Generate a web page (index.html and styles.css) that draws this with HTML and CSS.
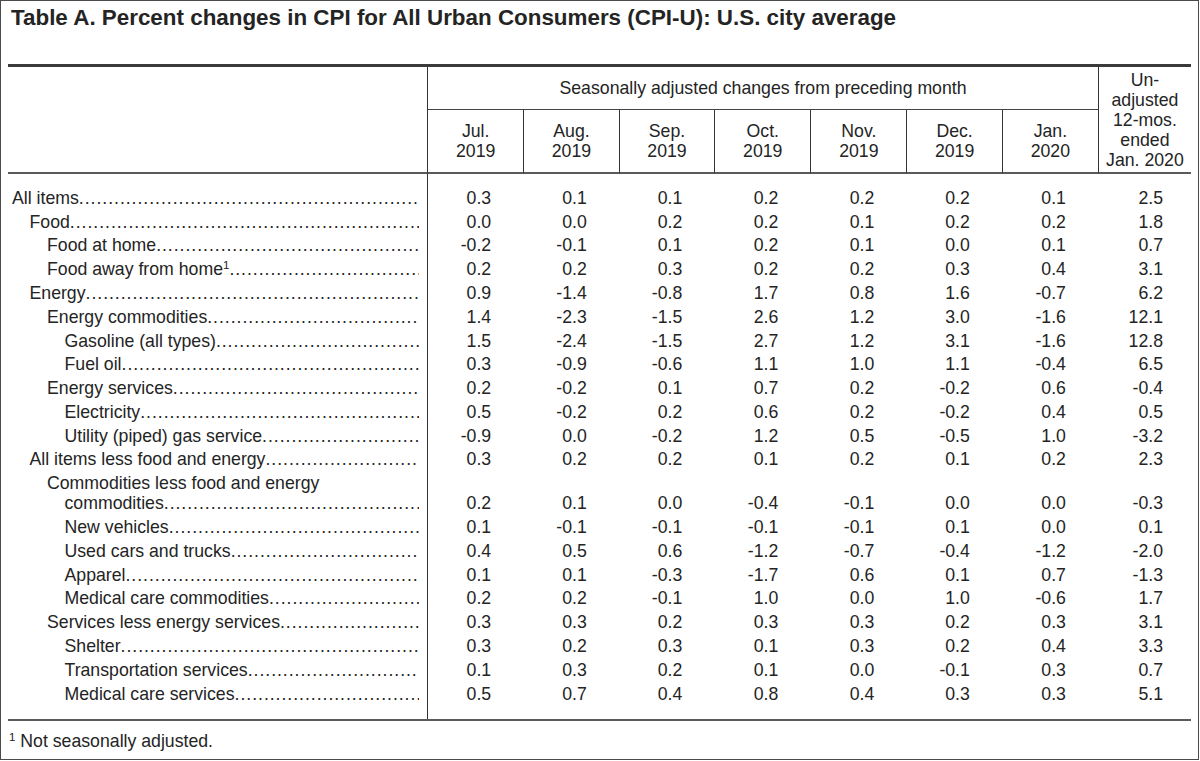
FILE: index.html
```html
<!DOCTYPE html>
<html>
<head>
<meta charset="utf-8">
<link rel="stylesheet" href="styles.css">
</head>
<body>
<div class="page">
  <div class="title">Table A. Percent changes in CPI for All Urban Consumers (CPI-U): U.S. city average</div>
  <table class="cpi">
    <colgroup>
      <col class="c-lab"><col class="c96"><col class="c95"><col class="c95"><col class="c96"><col class="c96"><col class="c95"><col class="c96"><col class="c-last">
    </colgroup>
    <thead>
      <tr class="hr1">
        <th rowspan="2" class="h-lab"></th>
        <th colspan="7" class="h-sa">Seasonally adjusted changes from preceding month</th>
        <th rowspan="2" class="h-un">Un-<br>adjusted<br>12-mos.<br>ended<br>Jan. 2020</th>
      </tr>
      <tr class="hr2">
        <th class="h-m">Jul.<br>2019</th>
        <th class="h-m">Aug.<br>2019</th>
        <th class="h-m">Sep.<br>2019</th>
        <th class="h-m">Oct.<br>2019</th>
        <th class="h-m">Nov.<br>2019</th>
        <th class="h-m">Dec.<br>2019</th>
        <th class="h-m">Jan.<br>2020</th>
      </tr>
    </thead>
    <tbody>
      <tr class="sp sp-top"><td class="lab"></td><td colspan="8"></td></tr>
      <tr><td class="lab"><div class="row l0"><span class="t">All items</span><span class="dots"></span></div></td><td>0.3</td><td>0.1</td><td>0.1</td><td>0.2</td><td>0.2</td><td>0.2</td><td>0.1</td><td class="last">2.5</td></tr>
      <tr><td class="lab"><div class="row l1"><span class="t">Food</span><span class="dots"></span></div></td><td>0.0</td><td>0.0</td><td>0.2</td><td>0.2</td><td>0.1</td><td>0.2</td><td>0.2</td><td class="last">1.8</td></tr>
      <tr><td class="lab"><div class="row l2"><span class="t">Food at home</span><span class="dots"></span></div></td><td>-0.2</td><td>-0.1</td><td>0.1</td><td>0.2</td><td>0.1</td><td>0.0</td><td>0.1</td><td class="last">0.7</td></tr>
      <tr><td class="lab"><div class="row l2"><span class="t">Food away from home<sup>1</sup></span><span class="dots"></span></div></td><td>0.2</td><td>0.2</td><td>0.3</td><td>0.2</td><td>0.2</td><td>0.3</td><td>0.4</td><td class="last">3.1</td></tr>
      <tr><td class="lab"><div class="row l1"><span class="t">Energy</span><span class="dots"></span></div></td><td>0.9</td><td>-1.4</td><td>-0.8</td><td>1.7</td><td>0.8</td><td>1.6</td><td>-0.7</td><td class="last">6.2</td></tr>
      <tr><td class="lab"><div class="row l2"><span class="t">Energy commodities</span><span class="dots"></span></div></td><td>1.4</td><td>-2.3</td><td>-1.5</td><td>2.6</td><td>1.2</td><td>3.0</td><td>-1.6</td><td class="last">12.1</td></tr>
      <tr><td class="lab"><div class="row l3"><span class="t">Gasoline (all types)</span><span class="dots"></span></div></td><td>1.5</td><td>-2.4</td><td>-1.5</td><td>2.7</td><td>1.2</td><td>3.1</td><td>-1.6</td><td class="last">12.8</td></tr>
      <tr><td class="lab"><div class="row l3"><span class="t">Fuel oil</span><span class="dots"></span></div></td><td>0.3</td><td>-0.9</td><td>-0.6</td><td>1.1</td><td>1.0</td><td>1.1</td><td>-0.4</td><td class="last">6.5</td></tr>
      <tr><td class="lab"><div class="row l2"><span class="t">Energy services</span><span class="dots"></span></div></td><td>0.2</td><td>-0.2</td><td>0.1</td><td>0.7</td><td>0.2</td><td>-0.2</td><td>0.6</td><td class="last">-0.4</td></tr>
      <tr><td class="lab"><div class="row l3"><span class="t">Electricity</span><span class="dots"></span></div></td><td>0.5</td><td>-0.2</td><td>0.2</td><td>0.6</td><td>0.2</td><td>-0.2</td><td>0.4</td><td class="last">0.5</td></tr>
      <tr><td class="lab"><div class="row l3"><span class="t">Utility (piped) gas service</span><span class="dots"></span></div></td><td>-0.9</td><td>0.0</td><td>-0.2</td><td>1.2</td><td>0.5</td><td>-0.5</td><td>1.0</td><td class="last">-3.2</td></tr>
      <tr><td class="lab"><div class="row l1"><span class="t">All items less food and energy</span><span class="dots"></span></div></td><td>0.3</td><td>0.2</td><td>0.2</td><td>0.1</td><td>0.2</td><td>0.1</td><td>0.2</td><td class="last">2.3</td></tr>
      <tr><td class="lab"><div class="wrap l2">Commodities less food and energy</div><div class="row l3"><span class="t">commodities</span><span class="dots"></span></div></td><td>0.2</td><td>0.1</td><td>0.0</td><td>-0.4</td><td>-0.1</td><td>0.0</td><td>0.0</td><td class="last">-0.3</td></tr>
      <tr><td class="lab"><div class="row l3"><span class="t">New vehicles</span><span class="dots"></span></div></td><td>0.1</td><td>-0.1</td><td>-0.1</td><td>-0.1</td><td>-0.1</td><td>0.1</td><td>0.0</td><td class="last">0.1</td></tr>
      <tr><td class="lab"><div class="row l3"><span class="t">Used cars and trucks</span><span class="dots"></span></div></td><td>0.4</td><td>0.5</td><td>0.6</td><td>-1.2</td><td>-0.7</td><td>-0.4</td><td>-1.2</td><td class="last">-2.0</td></tr>
      <tr><td class="lab"><div class="row l3"><span class="t">Apparel</span><span class="dots"></span></div></td><td>0.1</td><td>0.1</td><td>-0.3</td><td>-1.7</td><td>0.6</td><td>0.1</td><td>0.7</td><td class="last">-1.3</td></tr>
      <tr><td class="lab"><div class="row l3"><span class="t">Medical care commodities</span><span class="dots"></span></div></td><td>0.2</td><td>0.2</td><td>-0.1</td><td>1.0</td><td>0.0</td><td>1.0</td><td>-0.6</td><td class="last">1.7</td></tr>
      <tr><td class="lab"><div class="row l2"><span class="t">Services less energy services</span><span class="dots"></span></div></td><td>0.3</td><td>0.3</td><td>0.2</td><td>0.3</td><td>0.3</td><td>0.2</td><td>0.3</td><td class="last">3.1</td></tr>
      <tr><td class="lab"><div class="row l3"><span class="t">Shelter</span><span class="dots"></span></div></td><td>0.3</td><td>0.2</td><td>0.3</td><td>0.1</td><td>0.3</td><td>0.2</td><td>0.4</td><td class="last">3.3</td></tr>
      <tr><td class="lab"><div class="row l3"><span class="t">Transportation services</span><span class="dots"></span></div></td><td>0.1</td><td>0.3</td><td>0.2</td><td>0.1</td><td>0.0</td><td>-0.1</td><td>0.3</td><td class="last">0.7</td></tr>
      <tr><td class="lab"><div class="row l3"><span class="t">Medical care services</span><span class="dots"></span></div></td><td>0.5</td><td>0.7</td><td>0.4</td><td>0.8</td><td>0.4</td><td>0.3</td><td>0.3</td><td class="last">5.1</td></tr>
      <tr class="sp sp-bot"><td class="lab"></td><td colspan="8"></td></tr>
    </tbody>
  </table>
  <div class="foot"><sup>1</sup> Not seasonally adjusted.</div>
</div>
</body>
</html>
```

FILE: styles.css
```css
* { box-sizing: border-box; }

body {
  margin: 0;
  background: #fff;
  font-family: "Liberation Sans", Arial, sans-serif;
  color: #242424;
}

.page {
  width: 1199px;
  height: 760px;
  border: 1px solid #4a4a4a;
  padding: 4px 7px 0 7px;
}

.title {
  font-size: 22.4px;
  font-weight: bold;
  line-height: 26px;
  margin: 0 0 33px 3px;
  white-space: nowrap;
}

.cpi {
  border-collapse: separate;
  border-spacing: 0;
  table-layout: fixed;
  width: 1183px;
  font-size: 17.7px;
  line-height: 20px;
  border-top: 3px solid #3a3a3a;
  border-bottom: 2px solid #5a5a5a;
}

.c-lab { width: 420px; }
.c96 { width: 96px; }
.c95 { width: 95.5px; }
.c-last { width: 92px; }

.cpi th {
  font-weight: normal;
  text-align: center;
  vertical-align: middle;
  padding: 0;
}

.hr1 { height: 43px; }
.hr2 { height: 64px; }

.h-lab {
  border-right: 1px solid #333;
  border-bottom: 2px solid #5a5a5a;
}

.h-sa {
  border-right: 1px solid #333;
  border-bottom: 1px solid #444;
}

.h-m {
  border-right: 1px solid #333;
  border-bottom: 2px solid #5a5a5a;
}

.h-un {
  border-bottom: 2px solid #5a5a5a;
  padding-top: 2px;
}

.cpi td {
  text-align: right;
  vertical-align: bottom;
  padding: 1.9px 33px 1.9px 0;
  white-space: nowrap;
}

.cpi td.last { padding-right: 28px; }

.cpi td.lab {
  text-align: left;
  padding: 1.9px 8px 1.9px 4px;
  border-right: 1px solid #333;
}

.sp-top td { height: 12px; padding: 0 !important; }
.sp-bot td { height: 14px; padding: 0 !important; }

.row {
  display: flex;
  align-items: baseline;
}

.row .t { white-space: nowrap; }

.dots {
  flex: 1;
  min-width: 0;
  overflow: hidden;
  white-space: nowrap;
  letter-spacing: 0.95px;
}

.dots::after {
  content: "..........................................................................................................................";
}

.l0 { padding-left: 0; }
.l1 { padding-left: 17.5px; }
.l2 { padding-left: 35px; }
.l3 { padding-left: 52.5px; }

.wrap { white-space: nowrap; }

sup {
  font-size: 11.5px;
  line-height: 0;
  vertical-align: 6px;
}

.foot {
  margin-top: 10px;
  font-size: 17.7px;
  line-height: 20px;
  padding-left: 1px;
}
```
